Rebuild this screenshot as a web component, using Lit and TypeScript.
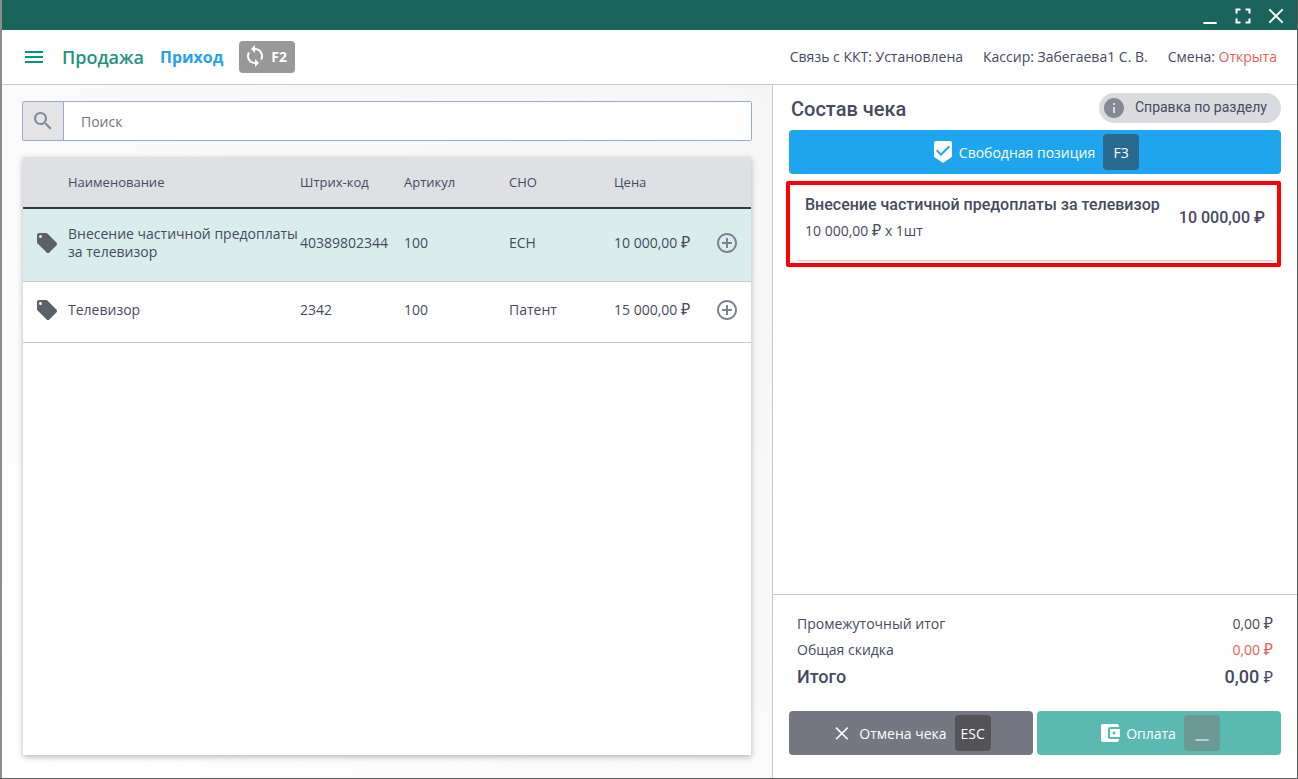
import { LitElement, html, css, svg } from "lit";
import { customElement, state } from "lit/decorators.js";

interface Product {
  name: string;
  barcode: string;
  article: string;
  tax: string;
  price: string;
}

const icon = (size: number, body: unknown) => html`
  <svg width=${size} height=${size} viewBox="0 0 24 24" fill="currentColor" aria-hidden="true">${body}</svg>
`;

const ruble = html`<span class="currency">₽</span>`;

const icons = {
  minimize: svg`<path d="M4 19.200h16v2.400H4z" />`,
  fullscreen: svg`<path d="M3 3h6v2.500H5.500V9H3zM15 3h6v6h-2.500V5.500H15zM3 15h2.500v3.500H9V21H3zM18.500 15H21v6h-6v-2.500h3.500z" />`,
  close: svg`<path d="M4 4 20 20M20 4 4 20" fill="none" stroke="currentColor" stroke-width="2.400" />`,
  cancel: svg`<path d="M6 5.500 20 19.500M20 5.500 6 19.500" fill="none" stroke="currentColor" stroke-width="1.900" />`,
  menu: svg`<path d="M3 18h18v-2H3v2zm0-5h18v-2H3v2zm0-7v2h18V6H3z" />`,
  sync: svg`<path d="M12 4V1L8 5l4 4V6c3.310 0 6 2.690 6 6 0 1.010-.25 1.970-.7 2.800l1.460 1.460C19.540 15.030 20 13.570 20 12c0-4.420-3.580-8-8-8zm0 14c-3.310 0-6-2.690-6-6 0-1.010.25-1.970.7-2.800L5.240 7.740C4.460 8.970 4 10.430 4 12c0 4.420 3.580 8 8 8v3l4-4-4-4v3z" />`,
  search: svg`<path d="M15.500 14h-.79l-.28-.27C15.410 12.590 16 11.110 16 9.500 16 5.910 13.090 3 9.500 3S3 5.910 3 9.500 5.910 16 9.500 16c1.610 0 3.090-.59 4.230-1.570l.27.28v.79l5 4.990L20.490 19l-4.990-5zm-6 0C7.010 14 5 11.990 5 9.500S7.010 5 9.500 5 14 7.010 14 9.500 11.990 14 9.500 14z" />`,
  tag: svg`<path d="M21.410 11.580l-9-9C12.050 2.220 11.550 2 11 2H4c-1.100 0-2 .9-2 2v7c0 .55.22 1.050.59 1.420l9 9c.36.36.86.58 1.410.58.55 0 1.050-.22 1.410-.59l7-7c.37-.36.59-.86.59-1.410 0-.55-.23-1.060-.59-1.420zM5.500 7C4.670 7 4 6.330 4 5.500S4.670 4 5.500 4 7 4.670 7 5.500 6.330 7 5.500 7z" />`,
  add: svg`<path d="M13 7h-2v4H7v2h4v4h2v-4h4v-2h-4V7zm-1-5C6.480 2 2 6.480 2 12s4.480 10 10 10 10-4.480 10-10S17.520 2 12 2zm0 18c-4.410 0-8-3.590-8-8s3.590-8 8-8 8 3.590 8 8-3.590 8-8 8z" />`,
  info: svg`<path d="M12 2C6.480 2 2 6.480 2 12s4.480 10 10 10 10-4.480 10-10S17.520 2 12 2zm1 15h-2v-6h2v6zm0-8h-2V7h2v2z" />`,
  check: svg`<path d="M19 1H5c-1.100 0-1.990.9-1.990 2L3 15.930c0 .69.35 1.300.88 1.660L12 23l8.110-5.410c.53-.36.88-.97.88-1.660L21 3c0-1.100-.9-2-2-2zm-9 15l-5-5 1.410-1.410L10 13.170l7.590-7.590L19 7l-9 9z" />`,
  wallet: svg`<path d="M21 18v1c0 1.100-.9 2-2 2H5c-1.110 0-2-.9-2-2V5c0-1.100.89-2 2-2h14c1.100 0 2 .9 2 2v1h-9c-1.110 0-2 .9-2 2v8c0 1.100.89 2 2 2h9zm-9-2h10V8H12v8zm4-2.500c-.83 0-1.500-.67-1.500-1.500s.67-1.500 1.500-1.500 1.500.67 1.500 1.500-.67 1.500-1.500 1.500z" />`,
};

@customElement("app-root")
export class AppRoot extends LitElement {
  @state() private selected = 0;

  private products: Product[] = [
    {
      name: "Внесение частичной предоплаты за телевизор",
      barcode: "40389802344",
      article: "100",
      tax: "ЕСН",
      price: "10 000,00",
    },
    { name: "Телевизор", barcode: "2342", article: "100", tax: "Патент", price: "15 000,00" },
  ];

  static styles = css`
    :host {
      display: block;
      height: 100vh;
      color: #454a60;
      font: 14px/18px "Open Sans", "Noto Sans", sans-serif;
    }
    *, *::before, *::after { box-sizing: border-box; }
    svg { display: block; flex: none; }
    h1, h2, p, dl, dd, dt, ul { margin: 0; padding: 0; }
    button { border: 0; padding: 0; background: none; color: inherit; font: inherit; cursor: pointer; }
    a { text-decoration: none; color: inherit; }

    .window {
      display: flex;
      flex-direction: column;
      height: 100%;
      border: solid #58595b;
      border-width: 0 1px 1px 0;
      box-shadow: inset 2px 0 #8b8c8e;
      padding-left: 2px;
      background: #fff;
    }
    .titlebar {
      flex: none;
      display: flex;
      justify-content: flex-end;
      align-items: center;
      gap: 13px;
      height: 30px;
      padding: 2px 11px 0 0;
      background: #1a645c;
      color: #fff;
    }
    .topbar {
      flex: none;
      display: flex;
      align-items: center;
      height: 55px;
      padding: 0 20px;
      border-bottom: 1px solid #c8c9ca;
    }
    .menu { color: #009684; }
    .title {
      margin-left: 16px;
      color: #1b9481;
      font-size: 18px;
      line-height: 24px;
      font-weight: 600;
    }
    .mode { margin-left: 16px; color: #27a2ea; font-size: 16px; line-height: 24px; font-weight: 700; }
    .switch {
      display: flex;
      align-items: center;
      gap: 4px;
      height: 32px;
      margin-left: 16px;
      padding: 0 8px 0 4px;
      border-radius: 4px;
      background: #999;
      color: #fff;
      font-weight: 700;
    }
    .switch svg { margin-bottom: 2px; }
    .status { display: flex; gap: 20px; margin-left: auto; }
    .open { color: #ef5b5b; }

    .body { flex: 1; min-height: 0; display: grid; grid-template-columns: minmax(0, 770fr) minmax(0, 525fr); }
    .catalog {
      display: flex;
      flex-direction: column;
      gap: 16px;
      padding: 16px 20px 23px;
      background: linear-gradient(to top right, #fff, #f5f5f5);
    }
    .search { flex: none; display: flex; height: 40px; border: 1px solid #97abcf; border-radius: 2px; }
    .search-icon {
      display: grid;
      place-items: center;
      width: 41px;
      border-right: 1px solid #97abcf;
      background: #e4e4e7;
      color: #878896;
    }
    .search-input {
      flex: 1;
      min-width: 0;
      border: 0;
      padding: 2px 17px 0;
      outline: 0;
      background: #fff;
      color: inherit;
      font: inherit;
    }
    .search-input::placeholder { color: #757575; opacity: 1; }
    .card { flex: 1; margin: 0 1px; background: #fff; box-shadow: 0 2px 6px rgba(0, 0, 0, 0.28); }
    .products { width: 100%; table-layout: fixed; border-collapse: separate; border-spacing: 0; text-align: left; }
    .col-icon { width: 45px; }
    .col-barcode { width: 104px; }
    .col-data { width: 105px; }
    .col-price { width: 101px; }
    .col-action { width: 36px; }
    .products th {
      height: 52px;
      padding: 0;
      border-bottom: 2px solid #323747;
      background: #dfe0e4;
      font-size: 13px;
      font-weight: 400;
    }
    .products td { height: 61px; padding: 0 0 4px; border-bottom: 1px solid #c8cacc; }
    .products .selected td { height: 73px; background: #d9eeec; }
    .add { display: block; color: #7c8090; }
    .tag { color: #5c606b; }
    .tag svg { margin-left: 12px; }
    .currency { font: 16px/16px "Open Sans", "Noto Sans", sans-serif; }

    .receipt { display: flex; flex-direction: column; min-height: 0; border-left: 1px solid #c8c9ca; background: #fff; }
    .receipt-head { display: flex; align-items: center; justify-content: space-between; padding: 8px 16px 7px 18px; }
    .receipt-title { padding-top: 2px; font: 500 20px/28px Roboto, sans-serif; }
    .help {
      display: flex;
      align-items: center;
      gap: 9px;
      height: 30px;
      padding: 0 14px 0 3px;
      border-radius: 15px;
      background: #dadbdf;
      font: 14px/18px Roboto, sans-serif;
    }
    .help svg { color: #858994; }
    .help span { padding-bottom: 2px; }
    .action {
      display: flex;
      align-items: center;
      justify-content: center;
      gap: 4px;
      height: 44px;
      border-radius: 4px;
      color: #fff;
    }
    .label { padding-top: 2px; }
    .free { margin: 0 16px; background: #1ea5ee; }
    .key {
      display: grid;
      place-items: center;
      width: 36px;
      height: 36px;
      margin-left: 4px;
      padding-top: 2px;
      border-radius: 4px;
    }
    .key-blue { background: #276b90; }
    .key-dark { background: #535457; }
    .key-teal { padding-top: 0; background: #6b9a96; color: #b9cfcd; }
    .items { flex: 1; list-style: none; padding: 7px 16px 0 13px; }
    .item { border: 4px solid #fe0000; border-radius: 2px; padding: 8px 4px 2px 7px; }
    .item-row {
      display: flex;
      justify-content: space-between;
      gap: 16px;
      height: 68px;
      padding: 0 8px;
      border-bottom: 1px solid #c8c9ca;
    }
    .item-name { font: 500 16px/24px Roboto, sans-serif; }
    .item-qty { margin-top: 4px; line-height: 20px; }
    .item-sum { font: 500 16px/50px Roboto, sans-serif; white-space: nowrap; }
    .totals { padding: 16px 24px 20px; border-top: 1px solid #c8c9ca; }
    .line { display: flex; justify-content: space-between; line-height: 26px; }
    .discount { color: #ef5b5b; }
    .grand { font: 500 18px/28px Roboto, sans-serif; }
    .buttons { display: grid; grid-template-columns: 1fr 1fr; gap: 4px; padding: 0 16px 23px; }
    .cancel { background: #757783; }
    .cancel svg { margin-right: 4px; }
    .pay { background: #5abab2; }
  `;

  render() {
    return html`
      <div class="window">
        <div class="titlebar">
          <button aria-label="Свернуть">${icon(20, icons.minimize)}</button>
          <button aria-label="Развернуть">${icon(20, icons.fullscreen)}</button>
          <button aria-label="Закрыть">${icon(20, icons.close)}</button>
        </div>
        <header class="topbar">
          <button class="menu" aria-label="Меню">${icon(24, icons.menu)}</button>
          <h1 class="title">Продажа</h1>
          <a class="mode" href="#">Приход</a>
          <button class="switch">${icon(24, icons.sync)}<span>F2</span></button>
          <div class="status">
            <span>Связь с ККТ: Установлена</span>
            <span>Кассир: Забегаева1 С. В.</span>
            <span>Смена: <span class="open">Открыта</span></span>
          </div>
        </header>
        <main class="body">
          <section class="catalog">
            <div class="search">
              <label class="search-icon" for="search" aria-label="Поиск">${icon(24, icons.search)}</label>
              <input class="search-input" id="search" type="text" placeholder="Поиск" />
            </div>
            <div class="card">
              <table class="products">
                <colgroup>
                  <col class="col-icon" />
                  <col />
                  <col class="col-barcode" />
                  <col class="col-data" />
                  <col class="col-data" />
                  <col class="col-price" />
                  <col class="col-action" />
                </colgroup>
                <thead>
                  <tr>
                    <th></th>
                    <th>Наименование</th>
                    <th>Штрих-код</th>
                    <th>Артикул</th>
                    <th>СНО</th>
                    <th>Цена</th>
                    <th></th>
                  </tr>
                </thead>
                <tbody>
                  ${this.products.map(
                    (p, i) => html`
                      <tr class=${i === this.selected ? "selected" : ""} @click=${() => (this.selected = i)}>
                        <td class="tag">${icon(24, icons.tag)}</td>
                        <td>${p.name}</td>
                        <td>${p.barcode}</td>
                        <td>${p.article}</td>
                        <td>${p.tax}</td>
                        <td>${p.price} ${ruble}</td>
                        <td><button class="add" aria-label="Добавить">${icon(24, icons.add)}</button></td>
                      </tr>
                    `
                  )}
                </tbody>
              </table>
            </div>
          </section>
          <section class="receipt">
            <div class="receipt-head">
              <h2 class="receipt-title">Состав чека</h2>
              <a class="help" href="#">${icon(24, icons.info)}<span>Справка по разделу</span></a>
            </div>
            <button class="action free">
              ${icon(24, icons.check)}<span class="label">Свободная позиция</span><span class="key key-blue">F3</span>
            </button>
            <ul class="items">
              <li class="item">
                <div class="item-row">
                  <div>
                    <p class="item-name">Внесение частичной предоплаты за телевизор</p>
                    <p class="item-qty">10 000,00 ${ruble} x 1шт</p>
                  </div>
                  <p class="item-sum">10 000,00 ₽</p>
                </div>
              </li>
            </ul>
            <dl class="totals">
              <div class="line"><dt>Промежуточный итог</dt><dd>0,00 ${ruble}</dd></div>
              <div class="line"><dt>Общая скидка</dt><dd class="discount">0,00 ${ruble}</dd></div>
              <div class="line grand"><dt>Итого</dt><dd>0,00 ${ruble}</dd></div>
            </dl>
            <div class="buttons">
              <button class="action cancel">
                ${icon(20, icons.cancel)}<span class="label">Отмена чека</span><span class="key key-dark">ESC</span>
              </button>
              <button class="action pay">
                ${icon(24, icons.wallet)}<span class="label">Оплата</span
                ><span class="key key-teal">${icon(20, icons.minimize)}</span>
              </button>
            </div>
          </section>
        </main>
      </div>
    `;
  }
}
